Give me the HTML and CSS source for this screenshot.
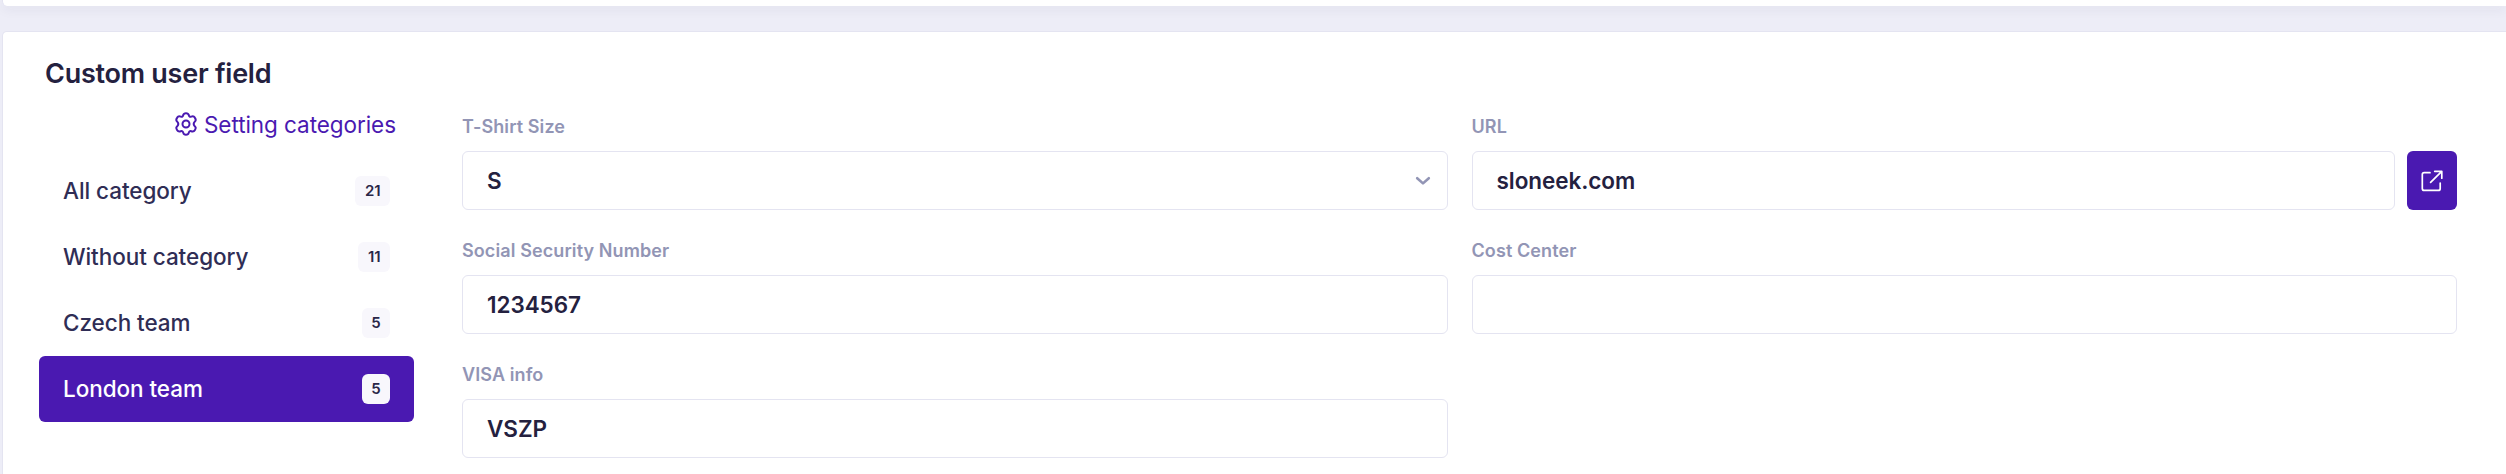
FILE: index.html
```html
<!DOCTYPE html>
<html lang="en">
<head>
    <meta charset="utf-8">
    <title>Custom user field</title>
    <link rel="stylesheet" href="styles.css">
</head>
<body>
    <div class="card card-previous"></div>
    <main class="card card-fields">
        <h2 class="card-title">Custom user field</h2>
        <div class="content">
            <aside class="sidebar">
                <a class="settings">
                    <svg class="icon-gear" viewBox="0 0 22 24" fill="none" stroke="currentColor" stroke-width="2" stroke-linejoin="round">
                        <path d="M8.3 3.1 Q8.7 1.2 11 1.2 Q13.3 1.2 13.7 3.1 Q14.2 5.2 16.3 4.6 Q18.7 3.7 19.8 5.6 Q21.6 8.4 19.8 9.6 Q17.6 12 19.8 14.2 Q21.6 15.6 19.8 18.2 Q18.7 20.1 16.3 19.2 Q14.2 18.6 13.7 20.9 Q13.3 22.8 11 22.8 Q8.7 22.8 8.3 20.9 Q7.8 18.6 5.7 19.2 Q3.3 20.1 2.2 18.2 Q0.4 15.6 2.2 14.2 Q4.4 12 2.2 9.6 Q0.4 8.4 2.2 5.6 Q3.3 3.7 5.7 4.6 Q7.8 5.2 8.3 3.1 Z"/>
                        <circle cx="11" cy="12" r="3.5"/>
                    </svg>
                    <span>Setting categories</span>
                </a>
                <div class="categories">
                    <div class="category"><span class="name">All category</span><span class="badge">21</span></div>
                    <div class="category"><span class="name">Without category</span><span class="badge">11</span></div>
                    <div class="category"><span class="name">Czech team</span><span class="badge">5</span></div>
                    <div class="category active"><span class="name">London team</span><span class="badge">5</span></div>
                </div>
            </aside>
            <section class="fields">
                <div class="field">
                    <div class="label">T-Shirt Size</div>
                    <div class="input select">
                        <span>S</span>
                        <svg class="icon-arrow" viewBox="0 0 16 10" fill="none" stroke="currentColor" stroke-width="2.6" stroke-linecap="round" stroke-linejoin="round">
                            <path d="M2.2 2.2l5.8 5.2L13.8 2.2"/>
                        </svg>
                    </div>
                </div>
                <div class="field">
                    <div class="label">URL</div>
                    <div class="input-row">
                        <div class="input">sloneek.com</div>
                        <button class="open-link" aria-label="Open link">
                            <svg class="icon-link" viewBox="0 0 22 22" fill="none" stroke="currentColor" stroke-width="1.7" stroke-linecap="round" stroke-linejoin="round">
                                <path d="M9 2.7H3.2Q1.3 2.7 1.3 4.6V18.4Q1.3 20.4 3.2 20.4H17.3Q19.2 20.4 19.2 18.4V13"/>
                                <path d="M13.7 1.3H20.8V8.2M20.5 1.6L9.6 12.4"/>
                            </svg>
                        </button>
                    </div>
                </div>
                <div class="field">
                    <div class="label">Social Security Number</div>
                    <div class="input">1234567</div>
                </div>
                <div class="field">
                    <div class="label">Cost Center</div>
                    <div class="input"></div>
                </div>
                <div class="field">
                    <div class="label">VISA info</div>
                    <div class="input">VSZP</div>
                </div>
            </section>
        </div>
    </main>
</body>
</html>
```

FILE: styles.css
```css
* {
    box-sizing: border-box;
}
body {
    margin: 0;
    height: 474px;
    overflow: hidden;
    background: #ededf7;
    font-family: Inter, "Liberation Sans", sans-serif;
    color: #24213f;
}
.card {
    margin-left: 2px;
    background: #fff;
    border: 1px solid #e4e4f1;
    border-right: 0;
}
.card-previous {
    height: 6px;
    border-top: 0;
    border-bottom: 0;
    border-radius: 0 0 0 5px;
    box-shadow: 0 3px 12px rgba(36, 33, 80, 0.08);
}
.card-fields {
    margin-top: 25px;
    height: 460px;
    padding: 25px 49px 0 36px;
    border-radius: 5px 0 0 0;
}
.card-title {
    margin: 0 0 0 6px;
    font-size: 27px;
    font-weight: 600;
    line-height: 34px;
    letter-spacing: -0.25px;
}
.content {
    display: flex;
    gap: 48px;
}
.sidebar {
    width: 375px;
}
.settings {
    display: flex;
    align-items: center;
    justify-content: flex-end;
    gap: 7px;
    height: 34px;
    margin-top: 16px;
    padding-right: 18px;
    font-size: 22.5px;
    letter-spacing: -0.06px;
    color: #4a19b1;
}
.icon-gear {
    width: 22px;
    height: 24px;
}
.categories {
    margin-top: 17px;
}
.category {
    display: flex;
    align-items: center;
    justify-content: space-between;
    height: 66px;
    padding: 0 24px;
    border-radius: 6px;
    font-size: 22.5px;
    font-weight: 500;
    letter-spacing: -0.06px;
    color: #2f2d55;
}
.category.active {
    background: #4a19b1;
    color: #fff;
}
.name {
    padding-bottom: 1px;
}
.badge {
    height: 30px;
    padding: 0 9.5px;
    border-radius: 6px;
    background: #f8f7fc;
    font-size: 15px;
    font-weight: 600;
    line-height: 30px;
    color: #2a2748;
}
.fields {
    flex: 1;
    display: grid;
    grid-template-columns: 1fr 1fr;
    gap: 0 24px;
    align-content: start;
    padding-top: 24px;
}
.field {
    height: 124px;
}
.label {
    height: 36px;
    font-size: 18px;
    font-weight: 600;
    line-height: 24px;
    letter-spacing: 0.1px;
    color: #9295b5;
}
.input {
    flex: 1;
    display: flex;
    align-items: center;
    height: 59px;
    padding: 0 24px;
    border: 1px solid #e4e4f1;
    border-radius: 6px;
    font-size: 22.5px;
    font-weight: 600;
    letter-spacing: -0.06px;
}
.select {
    justify-content: space-between;
    padding-right: 16px;
}
.icon-arrow {
    width: 16px;
    height: 10px;
    color: #9295b5;
}
.input-row {
    display: flex;
    gap: 12px;
}
.open-link {
    display: flex;
    align-items: center;
    justify-content: center;
    width: 50px;
    height: 59px;
    padding: 0;
    border: 0;
    border-radius: 6px;
    background: #4a19b1;
    color: #fff;
}
.icon-link {
    width: 22px;
    height: 22px;
}
```
